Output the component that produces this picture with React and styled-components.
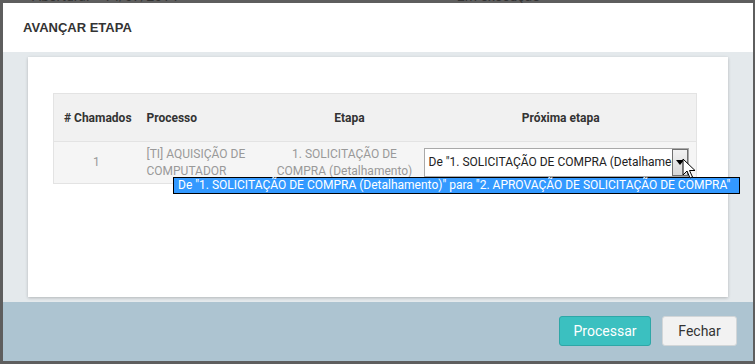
import React from 'react';
import styled, { createGlobalStyle } from 'styled-components';

const GlobalStyle = createGlobalStyle`
  html, body {
    margin: 0;
    padding: 0;
    width: 755px;
    height: 364px;
    overflow: hidden;
    background: #5e5e5e;
  }
  * { box-sizing: border-box; }
`

const Page = styled.div`
  position: relative;
  display: flow-root;
  width: 755px;
  height: 364px;
  overflow: hidden;
  background: #5e5e5e;
  font-family: Roboto, "Liberation Sans", sans-serif;
`

const BehindLine = styled.div`
  display: flex;
  gap: 14px;
  margin-top: -11px;
  padding-left: 32px;
  font-size: 14px;
  color: #333;
  line-height: 14px;
`

const BehindText = styled.span`
  margin-right: ${p => p.space || 0}px;
`

const Modal = styled.div`
  position: absolute;
  left: 3px;
  top: 3px;
  width: 750px;
  height: 358px;
  display: flex;
  flex-direction: column;
  background: #e4e9ec;
`

const Header = styled.div`
  height: 49px;
  flex: none;
  background: #fff;
  display: flex;
  align-items: center;
  padding-left: 20px;
`

const Title = styled.h4`
  margin: 0;
  font-family: "Liberation Sans", Arial, sans-serif;
  font-size: 13px;
  font-weight: bold;
  color: #333;
`

const Body = styled.div`
  height: 250px;
  flex: none;
  padding: 5px 25px;
`

const Card = styled.div`
  position: relative;
  height: 240px;
  background: #fff;
  box-shadow: 0 1px 3px rgba(0, 0, 0, 0.22);
  padding: 36px 0 0 25px;
`

const Table = styled.table`
  width: 644px;
  border-collapse: collapse;
  table-layout: fixed;
  font-size: 12px;
`

const Th = styled.th`
  height: 48px;
  background: #f1f1f1;
  border-top: 1px solid #e3e3e3;
  border-bottom: 1px solid #e3e3e3;
  color: #333;
  font-weight: bold;
  text-align: ${p => p.align || 'center'};
  padding: ${p => (p.align === 'left' ? '0 5px' : '0 0 0 10px')};
  width: ${p => (p.w ? p.w + 'px' : 'auto')};
  &:first-child { border-left: 1px solid #e3e3e3; padding: 0; }
  &:last-child { border-right: 1px solid #e3e3e3; padding: 0 0 0 6px; }
`

const Td = styled.td`
  height: 42px;
  background: #f5f5f5;
  border-bottom: 1px solid #e3e3e3;
  color: #999;
  line-height: 17px;
  text-align: ${p => p.align || 'center'};
  padding: 3px 5px 3px 5px;
  vertical-align: middle;
  &:first-child { border-left: 1px solid #e3e3e3; padding: 3px 8px 3px 5px; }
  &:last-child { border-right: 1px solid #e3e3e3; padding: 3px 5px 3px 4px; }
`

const SelectBox = styled.div`
  position: relative;
  width: 265px;
  height: 29px;
  border: 1px solid #a9a9a9;
  background: #fff;
  display: flex;
  align-items: center;
  overflow: hidden;
`

const SelectText = styled.span`
  flex: 1;
  white-space: nowrap;
  overflow: hidden;
  padding-left: 4px;
  color: #222;
  text-align: left;
`

const ArrowButton = styled.span`
  width: 16px;
  height: 27px;
  flex: none;
  border: 1px solid #707070;
  background: linear-gradient(#f2f2f2, #d8d8d8);
  display: flex;
  align-items: center;
  justify-content: center;
`

const Options = styled.div`
  position: absolute;
  left: 145px;
  top: 120px;
  width: 567px;
  height: 17px;
  border: 1px solid #000;
  background: #3399ff;
  color: #fff;
  font-size: 12px;
  line-height: 15px;
  padding-left: 4px;
  white-space: nowrap;
`

const Cursor = styled.svg`
  position: absolute;
  left: 654px;
  top: 101px;
`

const Footer = styled.div`
  flex: 1;
  background: #adc4d1;
  display: flex;
  justify-content: flex-end;
  align-items: flex-start;
  gap: 11px;
  padding: 14px 16px 0 0;
`

const Button = styled.button`
  height: 30px;
  width: ${p => p.w}px;
  border-radius: 3px;
  font-family: Roboto, "Liberation Sans", sans-serif;
  font-size: 14px;
  border: 1px solid ${p => (p.$primary ? '#2ea7a7' : '#d2d6d8')};
  background: ${p => (p.$primary ? '#3bc0c0' : '#f2f2f2')};
  color: ${p => (p.$primary ? '#fff' : '#333')};
  padding: 0;
`

const rows = [
  {
    id: 1,
    processo: ['[TI] AQUISIÇÃO DE', 'COMPUTADOR'],
    etapa: ['1. SOLICITAÇÃO DE', 'COMPRA (Detalhamento)'],
    proxima: 'De "1. SOLICITAÇÃO DE COMPRA (Detalhamento)" para "2. APROVAÇÃO DE SOLICITAÇÃO DE COMPRA"'
  }
]

export default function App() {
  return (
    <Page>
      <GlobalStyle />
      <BehindLine>
        <BehindText>Abertura:</BehindText>
        <BehindText space={265}>14/07/2014</BehindText>
        <BehindText>Em execução</BehindText>
      </BehindLine>
      <Modal>
        <Header>
          <Title>AVANÇAR ETAPA</Title>
        </Header>
        <Body>
          <Card>
            <Table>
              <thead>
                <tr>
                  <Th w={88}># Chamados</Th>
                  <Th w={128} align="left">Processo</Th>
                  <Th w={150}>Etapa</Th>
                  <Th>Próxima etapa</Th>
                </tr>
              </thead>
              <tbody>
                {rows.map(row => (
                  <tr key={row.id}>
                    <Td>{row.id}</Td>
                    <Td align="left">{row.processo[0]}<br />{row.processo[1]}</Td>
                    <Td>{row.etapa[0]}<br />{row.etapa[1]}</Td>
                    <Td>
                      <SelectBox>
                        <SelectText>{row.proxima}</SelectText>
                        <ArrowButton>
                          <svg width="8" height="5" viewBox="0 0 8 5">
                            <path d="M0 0 H8 L4 5 Z" fill="#000" />
                          </svg>
                        </ArrowButton>
                      </SelectBox>
                    </Td>
                  </tr>
                ))}
              </tbody>
            </Table>
            <Options>{rows[0].proxima}</Options>
            <Cursor width="14" height="22" viewBox="0 0 14 22">
              <path d="M1 1 L1 17 L5 13 L8 20 L10.5 19 L7.5 12.5 L13 12.5 Z" fill="#fff" stroke="#000" strokeWidth="1" strokeLinejoin="round" />
            </Cursor>
          </Card>
        </Body>
        <Footer>
          <Button $primary w={92}>Processar</Button>
          <Button w={75}>Fechar</Button>
        </Footer>
      </Modal>
    </Page>
  );
}
